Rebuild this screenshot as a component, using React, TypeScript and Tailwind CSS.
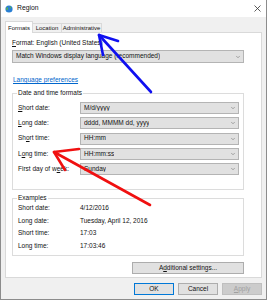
import { ChevronDown } from 'lucide-react'

const font = "font-['Segoe_UI','Liberation_Sans',Arial,sans-serif]"

function Combo({ text, className = '' }: { text: string; className?: string }) {
  return (
    <div className={`flex items-center justify-between bg-[#e1e1e1] border border-[#b4b4b4] pl-[3px] pr-[2px] ${className}`}>
      <span className="truncate">{text}</span>
      <ChevronDown className="w-[6px] h-[6px] text-[#606060] shrink-0" strokeWidth={2} />
    </div>
  )
}

function Key({ pre = '', k, post = '' }: { pre?: string; k: string; post?: string }) {
  return (
    <span>
      {pre}
      <span className="underline underline-offset-[1px]">{k}</span>
      {post}
    </span>
  )
}

const formats = [
  { label: <Key k="S" post="hort date:" />, value: 'M/d/yyyy' },
  { label: <Key k="L" post="ong date:" />, value: 'dddd, MMMM dd, yyyy' },
  { label: <Key pre="Sh" k="o" post="rt time:" />, value: 'HH:mm' },
  { label: <Key pre="L" k="o" post="ng time:" />, value: 'HH:mm:ss' },
  { label: <Key pre="First day of w" k="e" post="ek:" />, value: 'Sunday' },
]

const examples = [
  ['Short date:', '4/12/2016'],
  ['Long date:', 'Tuesday, April 12, 2016'],
  ['Short time:', '17:03'],
  ['Long time:', '17:03:46'],
]

function Annotations() {
  return (
    <svg className="absolute inset-0 pointer-events-none" width="267" height="300" viewBox="0 0 267 300">
      <g stroke="#1010f0" strokeWidth="2.6" strokeLinecap="round" strokeLinejoin="round" fill="none">
        <line x1="150" y1="92" x2="98" y2="35" />
        <polyline points="102,55 98,35 117,41" />
      </g>
      <g stroke="#f01010" strokeWidth="2.6" strokeLinecap="round" strokeLinejoin="round" fill="none">
        <line x1="149" y1="205" x2="53" y2="152" />
        <polyline points="64,170 53,152 78,149" />
      </g>
    </svg>
  )
}

export default function App() {
  return (
    <div className={`relative w-[267px] h-[300px] bg-[#f0f0f0] border-x border-b border-[#8c8c8c] text-[#111] text-[6.5px] leading-none ${font}`}>
      {/* title bar */}
      <div className="h-[17px] bg-white flex items-center pl-[4px] pr-[5px]">
        <svg width="8" height="8" viewBox="0 0 8 8">
          <circle cx="4" cy="4" r="3.6" fill="#2a7fd4" />
          <path d="M1.5 2.5 C2.5 2 3.2 3 3 4 C2.6 5 2 5.5 1.4 5 Z" fill="#5fb83f" />
          <path d="M4.6 1.2 C5.8 1.6 6.4 2.4 6.2 3.2 C5.4 3.4 4.8 2.6 4.6 1.2 Z" fill="#5fb83f" />
        </svg>
        <span className="ml-[4px] text-[6.8px]">Region</span>
        <svg className="ml-auto" width="7" height="7" viewBox="0 0 7 7">
          <path d="M0.5 0.5 L6.5 6.5 M6.5 0.5 L0.5 6.5" stroke="#333" strokeWidth="0.8" />
        </svg>
      </div>

      <div className="px-[4px] pt-[4px]">
        {/* tabs */}
        <div className="flex items-end h-[11px] text-[6px] whitespace-nowrap">
          <div className="relative z-10 -mb-px w-[28px] h-[12px] bg-white border border-b-0 border-[#d9d9d9] flex items-center justify-center">
            Formats
          </div>
          <div className="w-[29px] h-[9px] border border-l-0 border-b-0 border-[#d9d9d9] flex items-center justify-center">
            Location
          </div>
          <div className="w-[40px] h-[9px] border border-l-0 border-b-0 border-[#d9d9d9] flex items-center justify-center">
            Administrative
          </div>
        </div>

        {/* tab panel */}
        <div className="h-[246px] bg-white border border-[#d9d9d9] pl-[6px] pr-[17px] pt-[7px] flex flex-col">
          <div className="h-[7px] flex items-center">
            <Key k="F" post="ormat: English (United States)" />
          </div>
          <Combo className="mt-[3px] h-[13px]" text="Match Windows display language (recommended)" />
          <div className="mt-[14px] h-[7px] flex items-center pl-px">
            <span className="text-[#0066cc] underline underline-offset-[1px]">Language preferences</span>
          </div>

          <div className="relative mt-[9px] h-[97px] border border-[#dcdcdc] pl-[5px] pr-[4px] pt-[8px] flex flex-col gap-[3.25px]">
            <span className="absolute -top-[4px] left-[4px] bg-white px-px">Date and time formats</span>
            {formats.map((f, i) => (
              <div key={i} className="flex items-center h-[12px]">
                <div className="w-[62px]">{f.label}</div>
                <Combo className="flex-1 h-[12px]" text={f.value} />
              </div>
            ))}
          </div>

          <div className="relative mt-[8px] h-[58px] border border-[#dcdcdc] pl-[5px] pt-[3px] flex flex-col">
            <span className="absolute -top-[4px] left-[4px] bg-white px-px">Examples</span>
            {examples.map(([l, v]) => (
              <div key={l} className="flex items-center h-[12.67px]">
                <div className="w-[62px]">{l}</div>
                <div>{v}</div>
              </div>
            ))}
          </div>

          <div className="mt-[6px] ml-auto w-[112px] h-[12px] bg-[#e1e1e1] border border-[#adadad] flex items-center justify-center">
            <Key pre="A" k="d" post="ditional settings..." />
          </div>
        </div>

        {/* dialog buttons */}
        <div className="mt-[5px] flex justify-end gap-[4px]">
          <div className="w-[40px] h-[12px] bg-[#e1e1e1] border border-[#0078d7] flex items-center justify-center">OK</div>
          <div className="w-[40px] h-[12px] bg-[#e1e1e1] border border-[#adadad] flex items-center justify-center">Cancel</div>
          <div className="w-[40px] h-[12px] bg-[#cccccc] border border-[#bfbfbf] flex items-center justify-center text-[#a0a0a0]">
            <Key k="A" post="pply" />
          </div>
        </div>
      </div>

      <Annotations />
    </div>
  )
}
